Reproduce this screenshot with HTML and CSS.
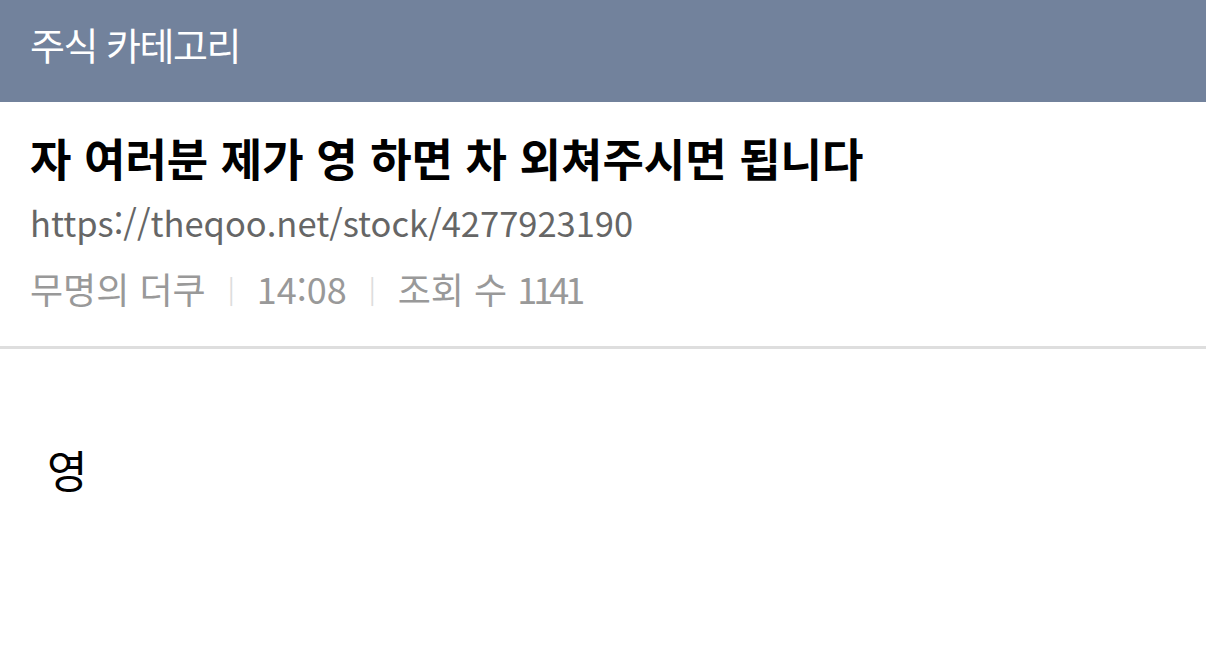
FILE: index.html
```html
<!DOCTYPE html>
<html lang="ko">
<head>
<meta charset="utf-8">
<link rel="stylesheet" href="styles.css">
</head>
<body>
<header class="cat-bar">주식 카테고리</header>
<section class="post-head">
  <h1 class="post-title">자 여러분 제가 영 하면 차 외쳐주시면 됩니다</h1>
  <div class="post-url">https://theqoo.net/stock/4277923190</div>
  <div class="post-meta">
    <span>무명의 더쿠</span><span class="sep">|</span><span>14:08</span><span class="sep">|</span><span>조회 수 <span class="count">1141</span></span>
  </div>
</section>
<article class="post-body">영</article>
</body>
</html>
```
FILE: styles.css
```css
html, body {
  margin: 0;
  padding: 0;
  background: #fff;
}
body {
  font-family: "Noto Sans CJK KR", "Noto Sans", sans-serif;
  width: 1206px;
  height: 659px;
  overflow: hidden;
}
.cat-bar {
  height: 102px;
  background: #72829c;
  color: #fff;
  font-size: 38px;
  line-height: 88px;
  padding-left: 30px;
  letter-spacing: -1.5px;
}
.post-head {
  padding: 28px 30px 35px;
  border-bottom: 3px solid #dedede;
}
.post-title {
  margin: 0;
  font-size: 45px;
  font-weight: 700;
  line-height: 56px;
  color: #000;
}
.post-url {
  margin-top: 13px;
  font-size: 34.5px;
  line-height: 46px;
  color: #666;
}
.post-meta {
  margin-top: 20px;
  font-size: 36px;
  line-height: 46px;
  color: #999;
  display: flex;
  align-items: center;
}
.count {
  letter-spacing: -4px;
}
.sep {
  color: #ddd;
  font-size: 26px;
  margin: 0 22px;
}
.post-body {
  padding: 95px 47px 0;
  font-size: 44px;
  line-height: 50px;
  color: #000;
}
```
